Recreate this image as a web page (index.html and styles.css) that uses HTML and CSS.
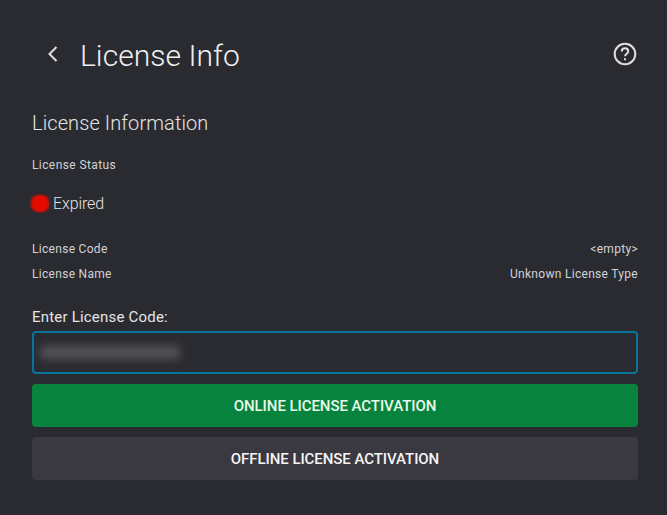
FILE: index.html
```html
<!DOCTYPE html>
<html lang="en">
<head>
<meta charset="utf-8">
<title>License Info</title>
<link rel="stylesheet" href="styles.css">
</head>
<body>
<main class="panel">
  <header class="header">
    <svg class="back" viewBox="0 0 12 18" role="img" aria-label="Back"><path d="M9.5 2 2.5 9l7 7"/></svg>
    <h1 class="title">License Info</h1>
    <svg class="help" viewBox="0 0 24 24" role="img" aria-label="Help">
      <circle cx="12" cy="12" r="10.3"/>
      <path d="M8.8 9.5c0-1.9 1.4-3.2 3.2-3.2s3.2 1.3 3.2 3c0 2.4-3.2 2.4-3.2 5"/>
      <path d="M12 16.2v2"/>
    </svg>
  </header>
  <h2 class="subtitle">License Information</h2>
  <div class="small status-label">License Status</div>
  <div class="status"><span class="dot"></span><span class="status-text">Expired</span></div>
  <dl class="details">
    <div class="row small"><dt class="code-label">License Code</dt><dd class="code-value">&lt;empty&gt;</dd></div>
    <div class="row small"><dt class="name-label">License Name</dt><dd class="name-value">Unknown License Type</dd></div>
  </dl>
  <div class="field-label">Enter License Code:</div>
  <div class="field"><span class="redacted"></span></div>
  <button class="button online">ONLINE LICENSE ACTIVATION</button>
  <button class="button offline">OFFLINE LICENSE ACTIVATION</button>
</main>
</body>
</html>
```
FILE: styles.css
```css
* { box-sizing: border-box; }
body {
  margin: 0;
  background: #2a2b30;
  color: #e4e4e7;
  font-family: Roboto, "Liberation Sans", sans-serif;
}
.panel {
  height: 515px;
  padding: 36px 29px 0 32px;
  display: flex;
  flex-direction: column;
}
.header { display: flex; align-items: center; height: 40px; }
.back { width: 12px; height: 18px; margin: 0 21px 4px 15px; }
.back, .help { fill: none; stroke: #e0e0e4; stroke-width: 2; }
.help { width: 24px; height: 24px; margin: 0 1px 4px auto; }
.title { margin: 0; font-size: 30px; line-height: 40px; font-weight: 350; letter-spacing: 0.05px; color: #f0f0f2; }
.subtitle { margin: 35px 0 0; font-size: 20px; line-height: 24px; font-weight: 350; letter-spacing: 0.1px; }
.small { font-size: 12px; line-height: 16px; letter-spacing: 0.3px; color: #d2d2d7; }
.status-label { margin-top: 22px; letter-spacing: 0.4px; }
.status { display: flex; align-items: center; height: 20px; margin-top: 21px; }
.dot { width: 18px; height: 17px; margin: 0 4px 1px -1px; border-radius: 7px; background: #e60b00; filter: blur(0.8px); }
.status-text { font-size: 16px; line-height: 20px; font-weight: 350; letter-spacing: -0.1px; }
.details { margin: 27px 0 0; display: grid; row-gap: 9px; }
.row { display: flex; justify-content: space-between; }
.row dd { margin: 0; }
.field-label { margin-top: 25px; font-size: 15px; line-height: 20px; letter-spacing: 0.2px; }
.field { display: flex; align-items: center; height: 43px; margin-top: 4px; padding-left: 6px; border: 2px solid #08749e; border-radius: 4px; flex: none; }
.redacted { width: 140px; height: 13px; border-radius: 4px; background: #545459; filter: blur(5px); }
.button { flex: none; height: 43px; margin: 10px 0 0; padding: 2px 0 0; border: 0; border-radius: 4px; color: #f5f5f7; font: 500 15px/41px Roboto, "Liberation Sans", sans-serif; letter-spacing: -0.06px; }
.online { background: #07833d; color: #e9fbe9; }
.offline { background: #3a3840; }
```
